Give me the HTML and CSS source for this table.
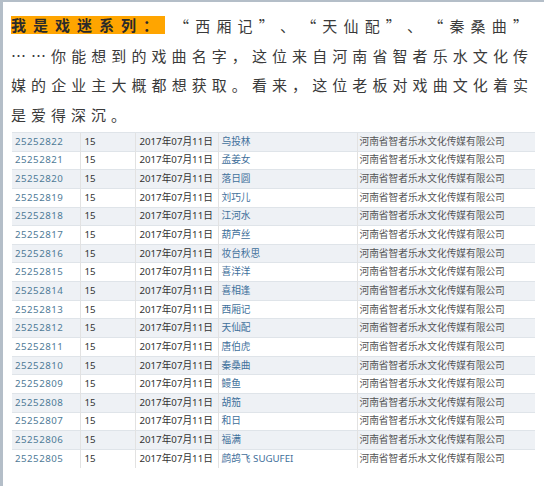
FILE: index.html
```html
<!DOCTYPE html>
<html lang="zh-CN">
<head>
<meta charset="utf-8">
<link rel="stylesheet" href="styles.css">
</head>
<body>
<div class="page">
  <p class="intro"><span class="mark">我是戏迷系列：</span>“西厢记”、“天仙配”、“秦桑曲”……你能想到的戏曲名字，这位来自河南省智者乐水文化传媒的企业主大概都想获取。看来，这位老板对戏曲文化着实是爱得深沉。</p>
  <table class="tbl">
    <colgroup>
      <col class="c1"><col class="c2"><col class="c3"><col class="c4"><col class="c5">
    </colgroup>
    <tbody>
      <tr><td class="id">25252822</td><td>15</td><td class="dt">2017年07月11日</td><td class="nm">乌投林</td><td class="co">河南省智者乐水文化传媒有限公司</td></tr>
      <tr><td class="id">25252821</td><td>15</td><td class="dt">2017年07月11日</td><td class="nm">孟姜女</td><td class="co">河南省智者乐水文化传媒有限公司</td></tr>
      <tr><td class="id">25252820</td><td>15</td><td class="dt">2017年07月11日</td><td class="nm">落日圆</td><td class="co">河南省智者乐水文化传媒有限公司</td></tr>
      <tr><td class="id">25252819</td><td>15</td><td class="dt">2017年07月11日</td><td class="nm">刘巧儿</td><td class="co">河南省智者乐水文化传媒有限公司</td></tr>
      <tr><td class="id">25252818</td><td>15</td><td class="dt">2017年07月11日</td><td class="nm">江河水</td><td class="co">河南省智者乐水文化传媒有限公司</td></tr>
      <tr><td class="id">25252817</td><td>15</td><td class="dt">2017年07月11日</td><td class="nm">葫芦丝</td><td class="co">河南省智者乐水文化传媒有限公司</td></tr>
      <tr><td class="id">25252816</td><td>15</td><td class="dt">2017年07月11日</td><td class="nm">妆台秋思</td><td class="co">河南省智者乐水文化传媒有限公司</td></tr>
      <tr><td class="id">25252815</td><td>15</td><td class="dt">2017年07月11日</td><td class="nm">喜洋洋</td><td class="co">河南省智者乐水文化传媒有限公司</td></tr>
      <tr><td class="id">25252814</td><td>15</td><td class="dt">2017年07月11日</td><td class="nm">喜相逢</td><td class="co">河南省智者乐水文化传媒有限公司</td></tr>
      <tr><td class="id">25252813</td><td>15</td><td class="dt">2017年07月11日</td><td class="nm">西厢记</td><td class="co">河南省智者乐水文化传媒有限公司</td></tr>
      <tr><td class="id">25252812</td><td>15</td><td class="dt">2017年07月11日</td><td class="nm">天仙配</td><td class="co">河南省智者乐水文化传媒有限公司</td></tr>
      <tr><td class="id">25252811</td><td>15</td><td class="dt">2017年07月11日</td><td class="nm">唐伯虎</td><td class="co">河南省智者乐水文化传媒有限公司</td></tr>
      <tr><td class="id">25252810</td><td>15</td><td class="dt">2017年07月11日</td><td class="nm">秦桑曲</td><td class="co">河南省智者乐水文化传媒有限公司</td></tr>
      <tr><td class="id">25252809</td><td>15</td><td class="dt">2017年07月11日</td><td class="nm">鳗鱼</td><td class="co">河南省智者乐水文化传媒有限公司</td></tr>
      <tr><td class="id">25252808</td><td>15</td><td class="dt">2017年07月11日</td><td class="nm">胡笳</td><td class="co">河南省智者乐水文化传媒有限公司</td></tr>
      <tr><td class="id">25252807</td><td>15</td><td class="dt">2017年07月11日</td><td class="nm">和日</td><td class="co">河南省智者乐水文化传媒有限公司</td></tr>
      <tr><td class="id">25252806</td><td>15</td><td class="dt">2017年07月11日</td><td class="nm">福满</td><td class="co">河南省智者乐水文化传媒有限公司</td></tr>
      <tr><td class="id">25252805</td><td>15</td><td class="dt">2017年07月11日</td><td class="nm">鹧鸪飞 SUGUFEI</td><td class="co">河南省智者乐水文化传媒有限公司</td></tr>
    </tbody>
  </table>
</div>
</body>
</html>
```

FILE: styles.css
```css
html, body {
  margin: 0;
  padding: 0;
  background: #ffffff;
}

.page {
  box-sizing: border-box;
  width: 544px;
  height: 486px;
  border-top: 2px solid #b4bec8;
  border-left: 3px solid #b4bec8;
  background: #ffffff;
  overflow: hidden;
}

.intro {
  margin: 0;
  padding: 9px 8px 0 8px;
  width: 522px;
  font-family: "Noto Sans CJK SC", sans-serif;
  font-size: 15px;
  line-height: 29.5px;
  letter-spacing: 5px;
  color: #3a3a3a;
  text-align: justify;
  text-spacing-trim: space-all;
  line-break: anywhere;
}

.mark {
  display: inline-block;
  height: 18px;
  line-height: 18px;
  margin-right: 9px;
  background: #ffa500;
  font-weight: bold;
  color: #2a2a2a;
  letter-spacing: 7px;
  vertical-align: 1px;
}

.tbl {
  margin: 3px 0 0 9px;
  width: 523px;
  border-collapse: collapse;
  table-layout: fixed;
  font-family: "Noto Sans", "Noto Sans CJK SC", sans-serif;
  font-size: 9.7px;
  color: #333333;
}

.c1 { width: 68px; }
.c2 { width: 55px; }
.c3 { width: 83px; }
.c4 { width: 139px; }
.c5 { width: 178px; }

.tbl tr {
  height: 18.65px;
}

.tbl tr:nth-child(odd) {
  background: #eef1f5;
}

.tbl td {
  padding: 0 0 0 4px;
  border-top: 1px solid #dfe4e9;
  border-left: 1px solid #e2e2e2;
  white-space: nowrap;
  overflow: hidden;
  vertical-align: middle;
  line-height: 12px;
}

.tbl td:first-child {
  border-left: none;
}

.tbl td.id {
  padding-left: 3px;
  color: #4f7b97;
  letter-spacing: 0.5px;
}

.tbl td.dt {
  color: #333333;
}

.tbl td.nm {
  padding-left: 3px;
  color: #3f709b;
}

.tbl td.co {
  padding-left: 2px;
  color: #555555;
}
```
